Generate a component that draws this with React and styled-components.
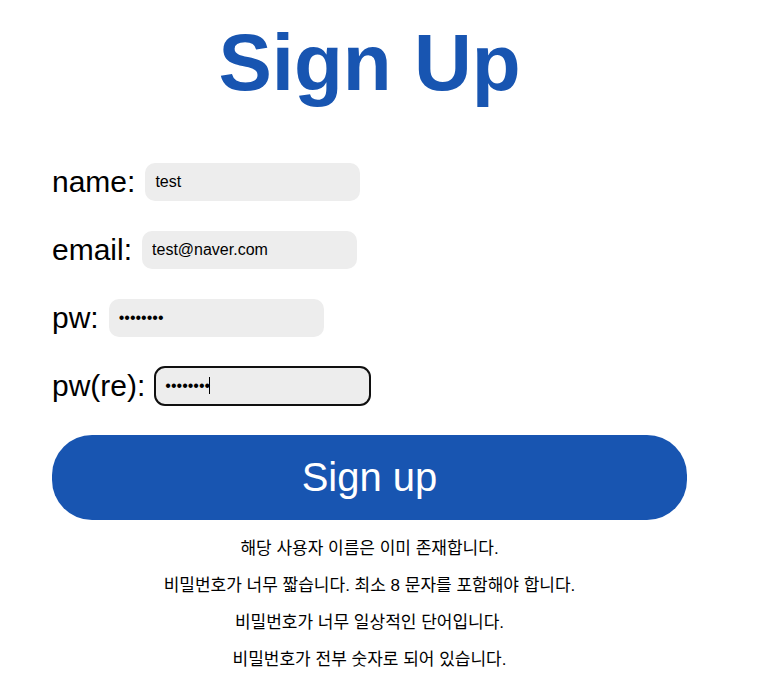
import React, { useEffect, useRef } from "react";
import styled, { createGlobalStyle } from "styled-components";

const GlobalStyle = createGlobalStyle`
  * { box-sizing: border-box; }
  body {
    margin: 0;
    background: #fff;
    color: #000;
    font-family: "Liberation Sans", "Noto Sans CJK KR", sans-serif;
  }
`;

const Page = styled.main`
  padding: 17px 85px 0 52px;
`;

const Title = styled.h1`
  margin: 0 0 54px;
  color: #1855b1;
  font-size: 80px;
  line-height: 92px;
  text-align: center;
`;

const Form = styled.form`
  display: flex;
  flex-direction: column;
  gap: 30px;
`;

const Field = styled.div`
  display: flex;
  align-items: center;
  gap: 10px;
`;

const Label = styled.label`
  font-size: 30px;
  line-height: 38px;
`;

const InputWrap = styled.div`
  position: relative;
  display: flex;
`;

const Input = styled.input`
  width: 215px;
  height: 38px;
  padding: 0 10px;
  border: 0;
  border-radius: 10px;
  background: #ededed;
  color: #000;
  caret-color: transparent;
  font: 16px "Liberation Sans", sans-serif;

  &:focus {
    outline: 2px solid #101010;
    outline-offset: -1px;
  }
`;

const Caret = styled.span`
  position: absolute;
  top: 10px;
  left: 54px;
  width: 1px;
  height: 17px;
  background: #000;
  pointer-events: none;
`;

const SubmitButton = styled.button`
  width: 100%;
  height: 85px;
  border: 0;
  border-radius: 40px;
  background: #1855b1;
  color: #fff;
  font: 40px "Liberation Sans", sans-serif;
  cursor: pointer;
`;

const Messages = styled.div`
  display: flex;
  flex-direction: column;
  gap: 16px;
  margin-top: 18px;
  text-align: center;
`;

const Message = styled.p`
  margin: 0;
  font-size: 17px;
  line-height: 21px;
`;

const fields = [
  { id: "name", label: "name:", type: "text", value: "test" },
  { id: "email", label: "email:", type: "email", value: "test@naver.com" },
  { id: "pw", label: "pw:", type: "password", value: "12345678" },
  { id: "pw-re", label: "pw(re):", type: "password", value: "12345678", focused: true },
];

const errors = [
  "해당 사용자 이름은 이미 존재합니다.",
  "비밀번호가 너무 짧습니다. 최소 8 문자를 포함해야 합니다.",
  "비밀번호가 너무 일상적인 단어입니다.",
  "비밀번호가 전부 숫자로 되어 있습니다.",
];

export default function App() {
  const activeInput = useRef(null);

  useEffect(() => {
    activeInput.current.focus();
  }, []);

  return (
    <>
      <GlobalStyle />
      <Page>
        <Title>Sign Up</Title>
        <Form onSubmit={(event) => event.preventDefault()}>
          {fields.map(({ id, label, type, value, focused }) => (
            <Field key={id}>
              <Label htmlFor={id}>{label}</Label>
              <InputWrap>
                <Input id={id} type={type} defaultValue={value} ref={focused ? activeInput : null} />
                {focused && <Caret aria-hidden="true" />}
              </InputWrap>
            </Field>
          ))}
          <SubmitButton type="submit">Sign up</SubmitButton>
        </Form>
        <Messages role="alert">
          {errors.map((error) => (
            <Message key={error}>{error}</Message>
          ))}
        </Messages>
      </Page>
    </>
  );
}
